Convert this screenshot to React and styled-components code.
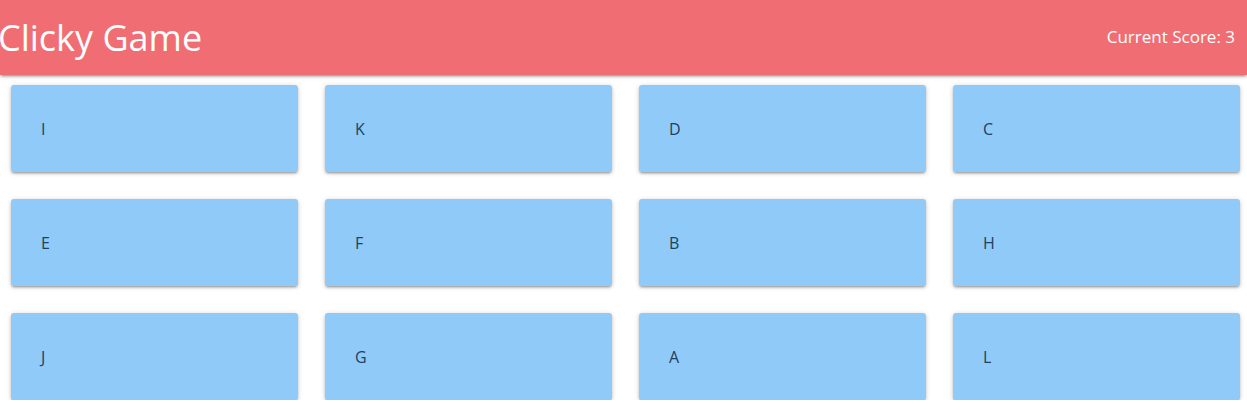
import React from 'react'
import styled, { createGlobalStyle } from 'styled-components'

const GlobalStyle = createGlobalStyle`
  html, body {
    margin: 0;
    padding: 0;
    background: #fff;
    font-family: 'Open Sans', 'Noto Sans', sans-serif;
  }
`

const Header = styled.header`
  height: 75px;
  background-color: #f06e73;
  display: flex;
  align-items: center;
  justify-content: space-between;
  padding-right: 12px;
  box-shadow: 0 2px 2px 0 rgba(0, 0, 0, 0.14), 0 3px 1px -2px rgba(0, 0, 0, 0.12),
    0 1px 5px 0 rgba(0, 0, 0, 0.2);
  position: relative;
  z-index: 1;
`

const Title = styled.h1`
  margin: 0;
  margin-left: -2px;
  color: #fff;
  font-size: 36px;
  font-weight: 400;
`

const Score = styled.div`
  color: #fff;
  font-size: 17px;
  padding-bottom: 2px;
`

const Grid = styled.main`
  display: grid;
  grid-template-columns: repeat(4, 287px);
  column-gap: 27px;
  row-gap: 27px;
  padding: 10px 0 0 11px;
`

const Card = styled.button`
  height: 87px;
  border: 0;
  border-radius: 3px;
  background-color: #90caf9;
  box-shadow: 0 2px 2px 0 rgba(0, 0, 0, 0.14), 0 3px 1px -2px rgba(0, 0, 0, 0.12),
    0 1px 5px 0 rgba(0, 0, 0, 0.2);
  display: flex;
  align-items: center;
  padding: 0 0 0 30px;
  font-family: inherit;
  font-size: 16px;
  color: #23405c;
  cursor: pointer;
  text-align: left;
`

const letters = ['I', 'K', 'D', 'C', 'E', 'F', 'B', 'H', 'J', 'G', 'A', 'L']

export default function App() {
  return (
    <>
      <GlobalStyle />
      <Header>
        <Title>Clicky Game</Title>
        <Score>Current Score: 3</Score>
      </Header>
      <Grid>
        {letters.map((l) => (
          <Card key={l}>{l}</Card>
        ))}
      </Grid>
    </>
  )
}
